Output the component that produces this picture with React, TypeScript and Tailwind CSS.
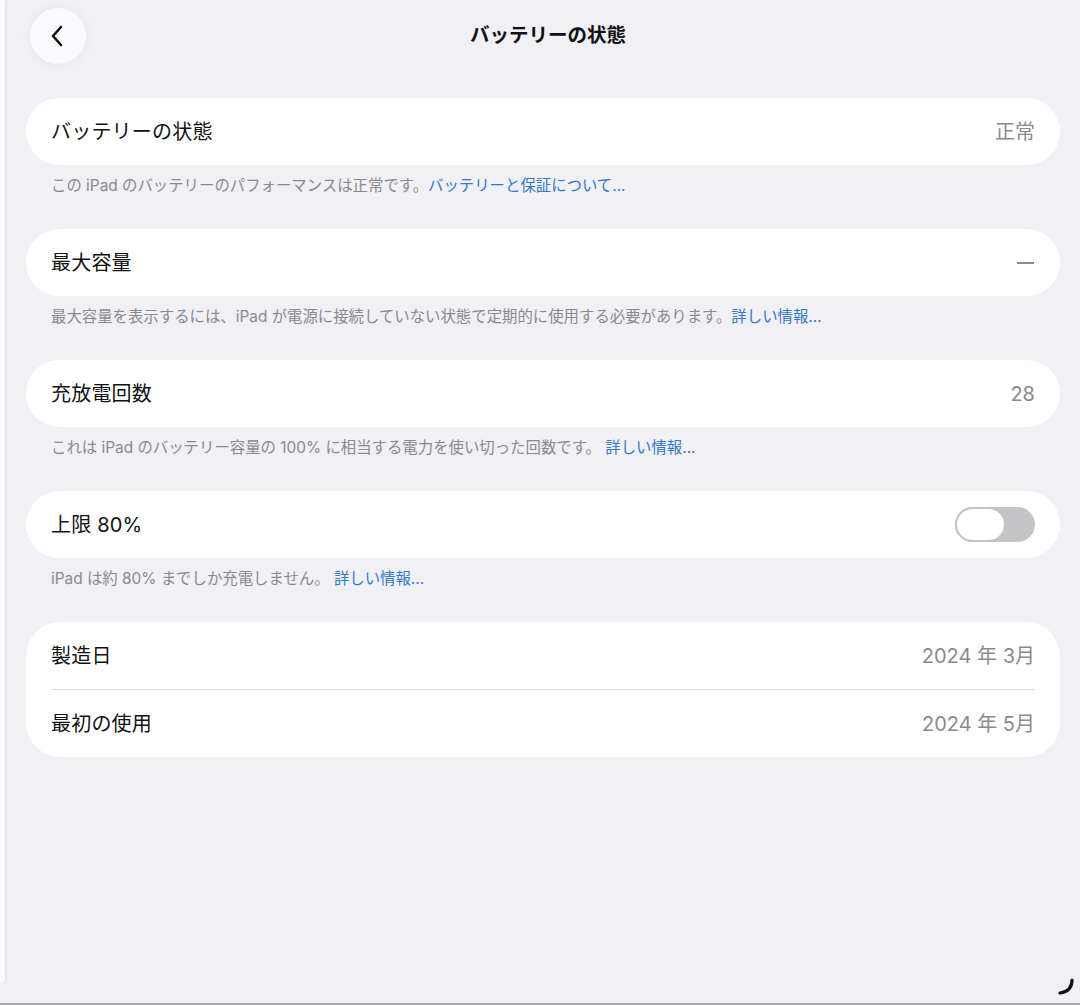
import React from 'react';

const font = { fontFamily: '"Inter", "Noto Sans CJK JP", sans-serif' };

const Row: React.FC<{ label: string; value?: string; children?: React.ReactNode }> = ({ label, value, children }) => (
  <div className="h-[67px] flex items-center justify-between px-[25px]">
    <span className="text-[20px] text-[#111] tracking-[0.2px]">{label}</span>
    {value !== undefined && <span className="text-[20px] text-[#8a8a8e]">{value}</span>}
    {children}
  </div>
);

const Footer: React.FC<{ text: string; link: string }> = ({ text, link }) => (
  <div className="h-[64px] pt-[10px] px-[25px] text-[15.4px] leading-[22px] text-[#8a8a8e]">
    {text}
    <span className="text-[#3478c6]">{link}</span>
  </div>
);

export default function App() {
  return (
    <div
      className="relative w-[1080px] h-[1005px] bg-[#f0f0f5] flex border-b-2 border-[#a9a9ad] overflow-hidden"
      style={font}
    >
      {/* edge of the sidebar */}
      <div className="w-[5px] h-[984px] bg-[#fbfbfd] rounded-br-[6px] shadow-[1px_0_3px_rgba(0,0,0,0.08)]" />

      <div className="flex-1 pl-[21px] pr-[20px]">
        {/* header */}
        <div className="relative h-[98px]">
          <button className="absolute left-[4px] top-[8px] w-[56px] h-[56px] rounded-full bg-[#fafafc] shadow-[0_0_14px_rgba(0,0,0,0.05)] flex items-center justify-center">
            <svg width="20" height="24" viewBox="0 0 20 24" fill="none">
              <path d="M13 3 L5 12 L13 21" stroke="#111" strokeWidth="2.6" strokeLinecap="round" strokeLinejoin="round" />
            </svg>
          </button>
          <div className="absolute left-0 right-0 top-[21px] text-center text-[19.5px] font-bold text-[#111] leading-[28px] pl-[10px]">
            バッテリーの状態
          </div>
        </div>

        <div className="bg-white rounded-[34px]">
          <Row label="バッテリーの状態" value="正常" />
        </div>
        <Footer text="この iPad のバッテリーのパフォーマンスは正常です。" link="バッテリーと保証について..." />

        <div className="bg-white rounded-[34px]">
          <Row label="最大容量">
            <span className="w-[17px] h-[2px] mr-[1px] bg-[#8a8a8e]" />
          </Row>
        </div>
        <Footer
          text="最大容量を表示するには、iPad が電源に接続していない状態で定期的に使用する必要があります。"
          link="詳しい情報..."
        />

        <div className="bg-white rounded-[34px]">
          <Row label="充放電回数" value="28" />
        </div>
        <Footer text="これは iPad のバッテリー容量の 100% に相当する電力を使い切った回数です。 " link="詳しい情報..." />

        <div className="bg-white rounded-[34px]">
          <Row label="上限 80%">
            <div className="relative w-[80px] h-[35px] rounded-full bg-[#c4c4c6]">
              <div className="absolute left-0 top-0 w-[51px] h-[35px] rounded-full bg-white border-[2px] border-[#c4c4c6]" />
            </div>
          </Row>
        </div>
        <Footer text="iPad は約 80% までしか充電しません。 " link="詳しい情報..." />

        <div className="bg-white rounded-[34px]">
          <Row label="製造日" value="2024 年 3月" />
          <div className="mx-[25px] h-px bg-[#dcdce0]" />
          <Row label="最初の使用" value="2024 年 5月" />
        </div>
      </div>

      {/* corner mark */}
      <svg className="absolute right-[4px] bottom-[6px]" width="20" height="20" viewBox="0 0 20 20" fill="none">
        <path d="M16 3 C16 10 12 15 4 16" stroke="#111" strokeWidth="3.2" strokeLinecap="round" />
      </svg>
    </div>
  );
}
